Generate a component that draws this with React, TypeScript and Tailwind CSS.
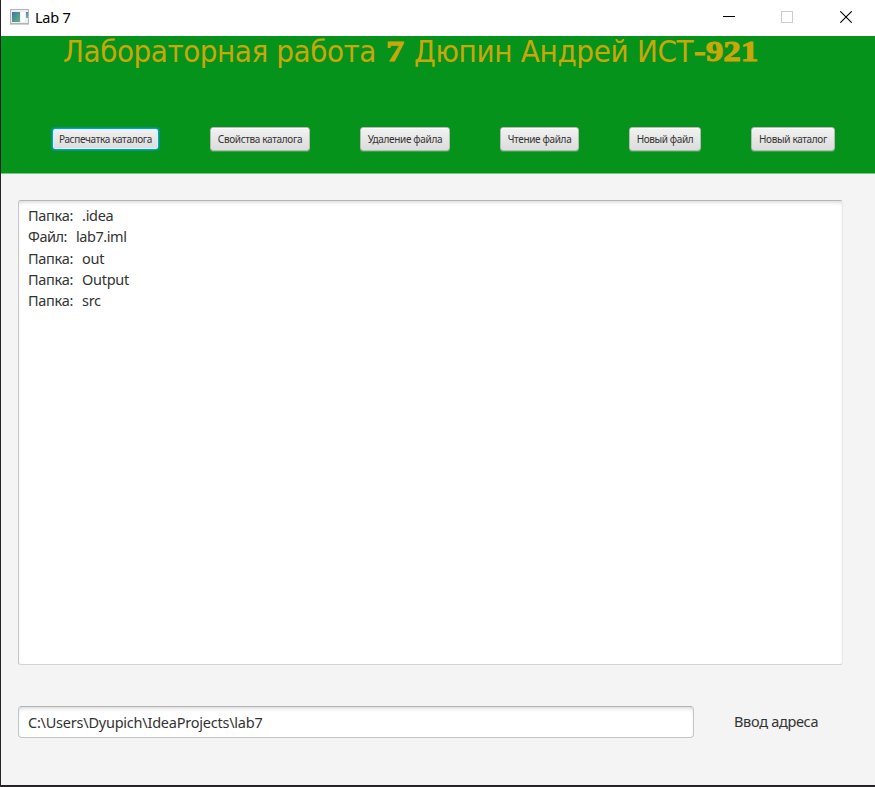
const actions = [
  { label: "Распечатка каталога", size: "w-[107px]", tracking: "tracking-[-0.34px]", focused: true },
  { label: "Свойства каталога", size: "w-[100px]", tracking: "tracking-[-0.34px]" },
  { label: "Удаление файла", size: "w-[90px]", tracking: "tracking-[-0.34px]" },
  { label: "Чтение файла", size: "w-[79px]", tracking: "tracking-[-0.34px]" },
  { label: "Новый файл", size: "w-[72px]", tracking: "tracking-[-0.4px]" },
  { label: "Новый каталог", size: "w-[84px]", tracking: "tracking-[-0.34px]" },
];

const entries = [
  { kind: "Папка:", name: ".idea", tracking: "tracking-[-0.3px]" },
  { kind: "Файл:", name: "lab7.iml", tracking: "tracking-[-0.45px]" },
  { kind: "Папка:", name: "out", tracking: "tracking-[-0.3px]" },
  { kind: "Папка:", name: "Output", tracking: "tracking-[-0.3px]" },
  { kind: "Папка:", name: "src", tracking: "tracking-[-0.3px]" },
];

function AppIcon() {
  return (
    <svg width="20" height="16" viewBox="0 0 20 16" shapeRendering="crispEdges">
      <defs>
        <linearGradient id="pane" x1="0" y1="0" x2="1" y2="1">
          <stop offset="0" stopColor="#4078a8" />
          <stop offset="1" stopColor="#62b47c" />
        </linearGradient>
        <linearGradient id="strip" x1="0" y1="0" x2="0" y2="1">
          <stop offset="0" stopColor="#4e86b0" />
          <stop offset="1" stopColor="#72bb8c" />
        </linearGradient>
      </defs>
      <rect x="1" width="19" height="16" fill="#d0d1d4" />
      <rect x="1" y="0" width="19" height="15" fill="#b3b5b9" />
      <rect x="2" y="1" width="17" height="13" fill="#eceef1" />
      <rect x="3" y="3" width="8" height="10" fill="url(#pane)" />
      <rect x="12" y="3" width="4" height="10" fill="#fafafa" />
      <rect x="17" y="3" width="2" height="6" fill="url(#strip)" />
    </svg>
  );
}

function TitleBar() {
  return (
    <header className="flex h-9 shrink-0 items-start bg-white pl-[8px] text-black">
      <div className="mt-[9px]"><AppIcon /></div>
      <span className="ml-[6px] mt-[7px] text-[14.5px] leading-5 tracking-[-0.25px]">Lab 7</span>
      <div className="ml-auto flex pr-[23px] pt-[11px]">
        <svg width="12" height="12" className="mr-[46px]" shapeRendering="crispEdges">
          <path d="M0 5.5H12" stroke="#000" />
        </svg>
        <svg width="12" height="12" className="mr-[47px]" shapeRendering="crispEdges">
          <rect x="0.5" y="0.5" width="11" height="11" fill="none" stroke="#ccc" />
        </svg>
        <svg width="12" height="12">
          <path d="M0.3 0.3L11.7 11.7M11.7 0.3L0.3 11.7" stroke="#000" strokeWidth="1.1" />
        </svg>
      </div>
    </header>
  );
}

export default function App() {
  return (
    <div className="flex h-[787px] w-[875px] flex-col overflow-hidden border-b-2 border-l border-[#252326] bg-[#f4f4f4] font-['Noto_Sans','Open_Sans',sans-serif] text-[#333]">
      <TitleBar />
      <section className="flex h-[138px] shrink-0 flex-col border-b border-[#7cc487] bg-[#05931b]">
        <h1 className="ml-[62px] h-[42px] whitespace-pre font-['DejaVu_Sans_Condensed','DejaVu_Sans',sans-serif] text-[31px] leading-[31px] font-normal text-[#c8a70b]">
          <span className="inline-block w-[323px] tracking-[-0.45px]">Лабораторная работа</span>
          <span className="inline-block w-[28px] origin-left -translate-y-px scale-x-[1.2] font-['Liberation_Serif',serif] text-[30px] leading-[30px] font-bold [-webkit-text-stroke:1px_#c8a70b]">7</span>
          <span className="inline-block w-[280px] tracking-[-0.33px]">Дюпин Андрей ИСТ</span>
          <span className="inline-block origin-left -translate-y-px scale-x-[1.17] font-['Liberation_Serif',serif] text-[30px] leading-[30px] font-bold [-webkit-text-stroke:1px_#c8a70b]">-921</span>
        </h1>
        <nav className="mt-[49px] flex pl-[51px]">
          <div className="flex gap-[50px]">
            {actions.map((a) => (
              <button
                key={a.label}
                className={`${a.size} ${a.tracking} flex items-center justify-center rounded-[3px] border bg-linear-to-b from-[#f2f2f2] to-[#dcdcdc] text-[10px] leading-none whitespace-nowrap ${
                  a.focused
                    ? "h-[22px] mt-px mr-px border-[#039ed3] shadow-[0_0_1px_1px_#079dc080,inset_0_0_0_1px_#d8f0f8]"
                    : "h-[24px] border-[#b8b8b8] shadow-[inset_0_1px_0_#fff,0_1px_0_#ffffff30]"
                }`}
              >
                {a.label}
              </button>
            ))}
          </div>
        </nav>
      </section>
      <main className="flex flex-1 flex-col pl-[17px]">
        <div className="mt-[26px] h-[465px] w-[825px] rounded-[3px] border border-t-[#b5b5b5] border-r-[#e8e8e8] border-b-[#d3d3d3] border-l-[#c8c8c8] bg-white pt-[4px] pl-[9px] text-[14.5px] leading-[21.3px] shadow-[inset_0_3px_4px_-2px_#0000002e]">
          {entries.map((e) => (
            <div key={e.name} className={`flex gap-[9px] ${e.tracking}`}>
              <span>{e.kind}</span>
              <span>{e.name}</span>
            </div>
          ))}
        </div>
        <div className="mt-[41px] flex items-center">
          <div className="flex h-[32px] w-[676px] items-center rounded-[4px] border border-[#c5c5c5] border-t-[#b3b3b3] bg-white pl-[9px] pt-px text-[14.5px] tracking-[-0.23px] shadow-[inset_0_3px_4px_-2px_#0000002e]">
            C:\Users\Dyupich\IdeaProjects\lab7
          </div>
          <span className="ml-[40px] text-[14.5px] tracking-[-0.3px]">Ввод адреса</span>
        </div>
      </main>
    </div>
  );
}
